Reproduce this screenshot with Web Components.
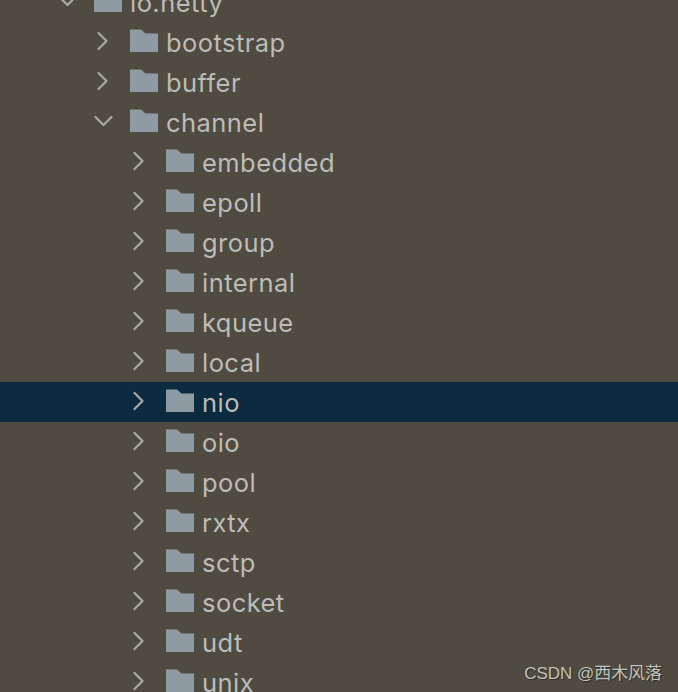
<!DOCTYPE html>
<html><head><meta charset="utf-8">
<style>
html,body{margin:0;padding:0;background:#4f4b41;overflow:hidden;height:692px}
</style></head><body>
<template id="row-t">
<style>
:host{display:flex;align-items:center;height:40px;color:#bcbcb8;font:25.5px/40px Inter,"Liberation Sans",sans-serif;letter-spacing:.45px;padding-left:calc(var(--lvl,0)*36px + 58px);box-sizing:border-box;white-space:nowrap}
:host([selected]){background:#0c2a40}
.chev{width:22px;height:22px;flex:none;margin-top:-2px}
.fold{width:28px;height:23px;flex:none;margin-left:14px;margin-top:-3px}
.label{margin-left:8px;margin-top:1px}
</style>
<svg class="chev" viewBox="0 0 22 22"><path class="p" fill="none" stroke="#a9a9a5" stroke-width="2.2" stroke-linecap="round" stroke-linejoin="round"/></svg>
<svg class="fold" viewBox="0 0 28 23"><path d="M0 0.5H11L15.5 4.5H28V23H0Z" fill="#8f9ba3"/></svg>
<span class="label"><slot></slot></span>
</template>
<template id="tree-t">
<style>:host{display:block;margin-top:-18px}</style><slot></slot>
</template>
<template id="mark-t">
<style>:host{display:block;position:absolute;right:16px;bottom:8px;color:#c2c2bd;font:17px/20px "Liberation Sans","Noto Sans CJK SC",sans-serif;letter-spacing:-.05px;text-shadow:1px 1px 1px #2b2a24}</style><slot></slot>
</template>
<tree-view>
<tree-row lvl="0" open>io.netty</tree-row>
<tree-row lvl="1">bootstrap</tree-row>
<tree-row lvl="1">buffer</tree-row>
<tree-row lvl="1" open>channel</tree-row>
<tree-row lvl="2">embedded</tree-row>
<tree-row lvl="2">epoll</tree-row>
<tree-row lvl="2">group</tree-row>
<tree-row lvl="2">internal</tree-row>
<tree-row lvl="2">kqueue</tree-row>
<tree-row lvl="2">local</tree-row>
<tree-row lvl="2" selected>nio</tree-row>
<tree-row lvl="2">oio</tree-row>
<tree-row lvl="2">pool</tree-row>
<tree-row lvl="2">rxtx</tree-row>
<tree-row lvl="2">sctp</tree-row>
<tree-row lvl="2">socket</tree-row>
<tree-row lvl="2">udt</tree-row>
<tree-row lvl="2">unix</tree-row>
</tree-view>
<water-mark>CSDN @西木风落</water-mark>
<script>
function mk(name,id,init){customElements.define(name,class extends HTMLElement{constructor(){super();const r=this.attachShadow({mode:'open'});r.appendChild(document.getElementById(id).content.cloneNode(true));}connectedCallback(){init&&init(this)}})}
mk('tree-row','row-t',el=>{el.style.setProperty('--lvl',el.getAttribute('lvl'));el.shadowRoot.querySelector('.p').setAttribute('d',el.hasAttribute('open')?'M1.5 7L9.5 15L17.5 7':'M4.5 3L12.5 11L4.5 19')});
mk('tree-view','tree-t');
mk('water-mark','mark-t');
</script>
</body></html>
